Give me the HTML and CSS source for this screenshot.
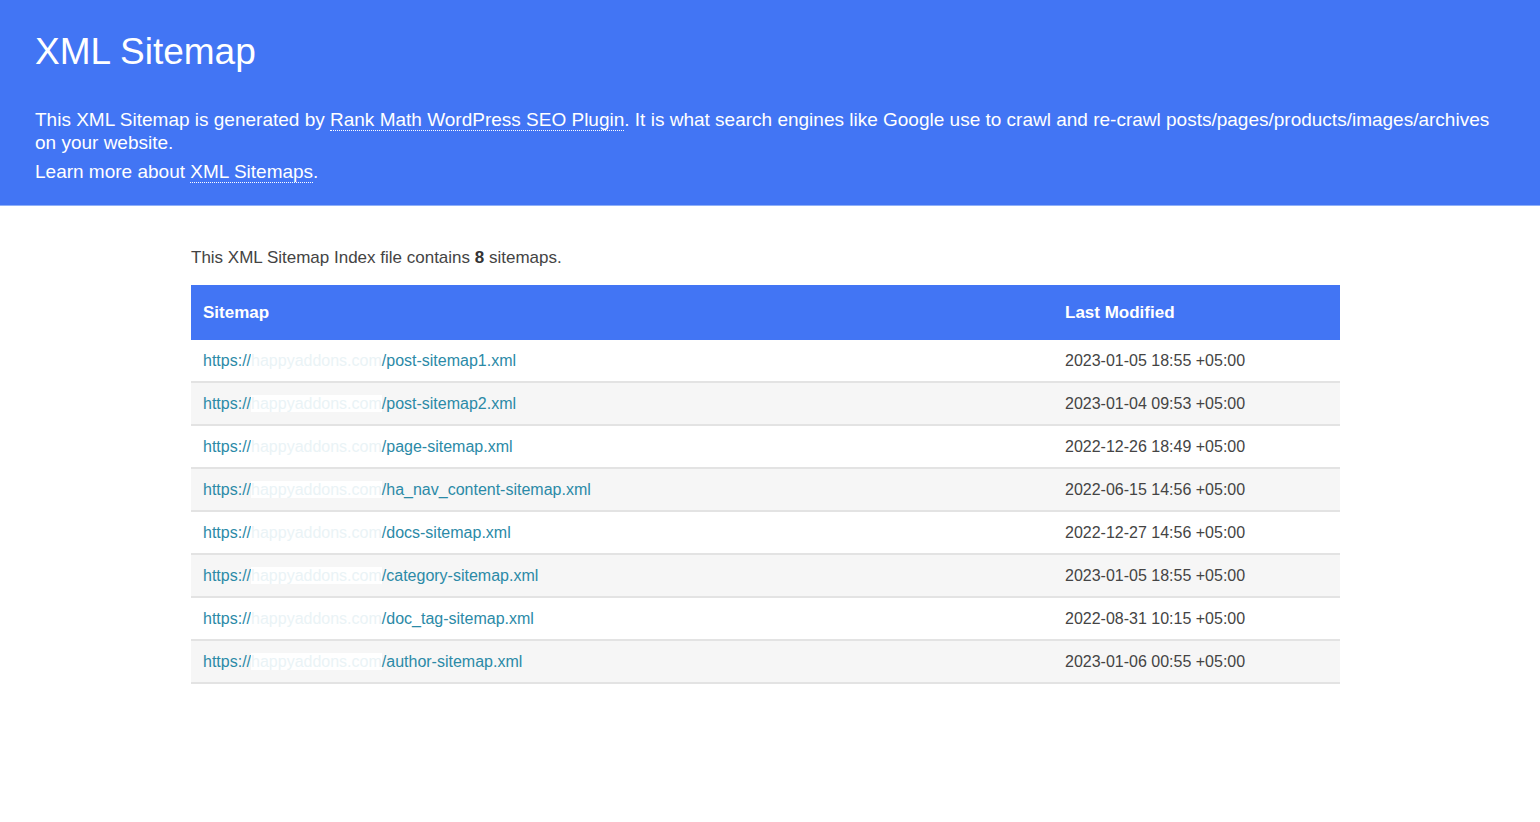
FILE: index.html
```html
<!DOCTYPE html>
<html>
<head>
<meta charset="utf-8">
<title>XML Sitemap</title>
<link rel="stylesheet" href="styles.css">
</head>
<body>
<header class="hero">
  <h1 class="hero-title">XML Sitemap</h1>
  <p class="hero-text">This XML Sitemap is generated by <a class="hero-link" href="#">Rank Math WordPress SEO Plugin</a>. It is what search engines like Google use to crawl and re-crawl posts/pages/products/images/archives on your website.</p>
  <p class="hero-text hero-more">Learn more about <a class="hero-link" href="#">XML Sitemaps</a>.</p>
</header>
<main class="content">
  <p class="summary">This XML Sitemap Index file contains <strong>8</strong> sitemaps.</p>
  <table class="sitemaps">
    <thead>
      <tr><th class="col-url">Sitemap</th><th class="col-date">Last Modified</th></tr>
    </thead>
    <tbody>
      <tr><td><a class="url" href="#">https://<span class="blur">happyaddons.com</span>/post-sitemap1.xml</a></td><td>2023-01-05 18:55 +05:00</td></tr>
      <tr><td><a class="url" href="#">https://<span class="blur">happyaddons.com</span>/post-sitemap2.xml</a></td><td>2023-01-04 09:53 +05:00</td></tr>
      <tr><td><a class="url" href="#">https://<span class="blur">happyaddons.com</span>/page-sitemap.xml</a></td><td>2022-12-26 18:49 +05:00</td></tr>
      <tr><td><a class="url" href="#">https://<span class="blur">happyaddons.com</span>/ha_nav_content-sitemap.xml</a></td><td>2022-06-15 14:56 +05:00</td></tr>
      <tr><td><a class="url" href="#">https://<span class="blur">happyaddons.com</span>/docs-sitemap.xml</a></td><td>2022-12-27 14:56 +05:00</td></tr>
      <tr><td><a class="url" href="#">https://<span class="blur">happyaddons.com</span>/category-sitemap.xml</a></td><td>2023-01-05 18:55 +05:00</td></tr>
      <tr><td><a class="url" href="#">https://<span class="blur">happyaddons.com</span>/doc_tag-sitemap.xml</a></td><td>2022-08-31 10:15 +05:00</td></tr>
      <tr><td><a class="url" href="#">https://<span class="blur">happyaddons.com</span>/author-sitemap.xml</a></td><td>2023-01-06 00:55 +05:00</td></tr>
    </tbody>
  </table>
</main>
</body>
</html>
```
FILE: styles.css
```css
html, body {
  margin: 0;
  padding: 0;
  background: #fff;
  font-family: "Liberation Sans", Arial, sans-serif;
}
.hero {
  background: #4275f4;
  color: #fff;
  padding: 30px 35px 22px;
  border-bottom: 1px solid #8fb0f8;
}
.hero-title {
  margin: 0 0 34px;
  font-size: 37px;
  font-weight: normal;
  line-height: 44px;
}
.hero-text {
  margin: 0;
  font-size: 19px;
  line-height: 23px;
}
.hero-more {
  margin-top: 6px;
}
.hero-link {
  color: #fff;
  text-decoration: none;
  border-bottom: 1px dotted #fff;
}
.content {
  width: 1149px;
  margin: 0 0 0 191px;
  padding-top: 41px;
}
.summary {
  margin: 0 0 16px;
  font-size: 17px;
  line-height: 22px;
  color: #444;
}
.summary strong {
  color: #333;
}
.sitemaps {
  width: 100%;
  border-collapse: collapse;
  font-size: 16px;
}
.sitemaps th {
  background: #4275f4;
  color: #fff;
  text-align: left;
  font-weight: bold;
  font-size: 17px;
  height: 55px;
  padding: 0 12px;
}
.sitemaps .col-date {
  width: 263px;
}
.sitemaps td {
  height: 41px;
  padding: 0 12px;
  color: #444;
  border-bottom: 2px solid #e3e3e3;
}
.sitemaps tbody tr:nth-child(even) td {
  background: #f6f6f6;
}
.url {
  color: #2b8aa7;
  text-decoration: none;
}
.blur {
  color: #eaf3f6;
  background: #fff;
}
```
